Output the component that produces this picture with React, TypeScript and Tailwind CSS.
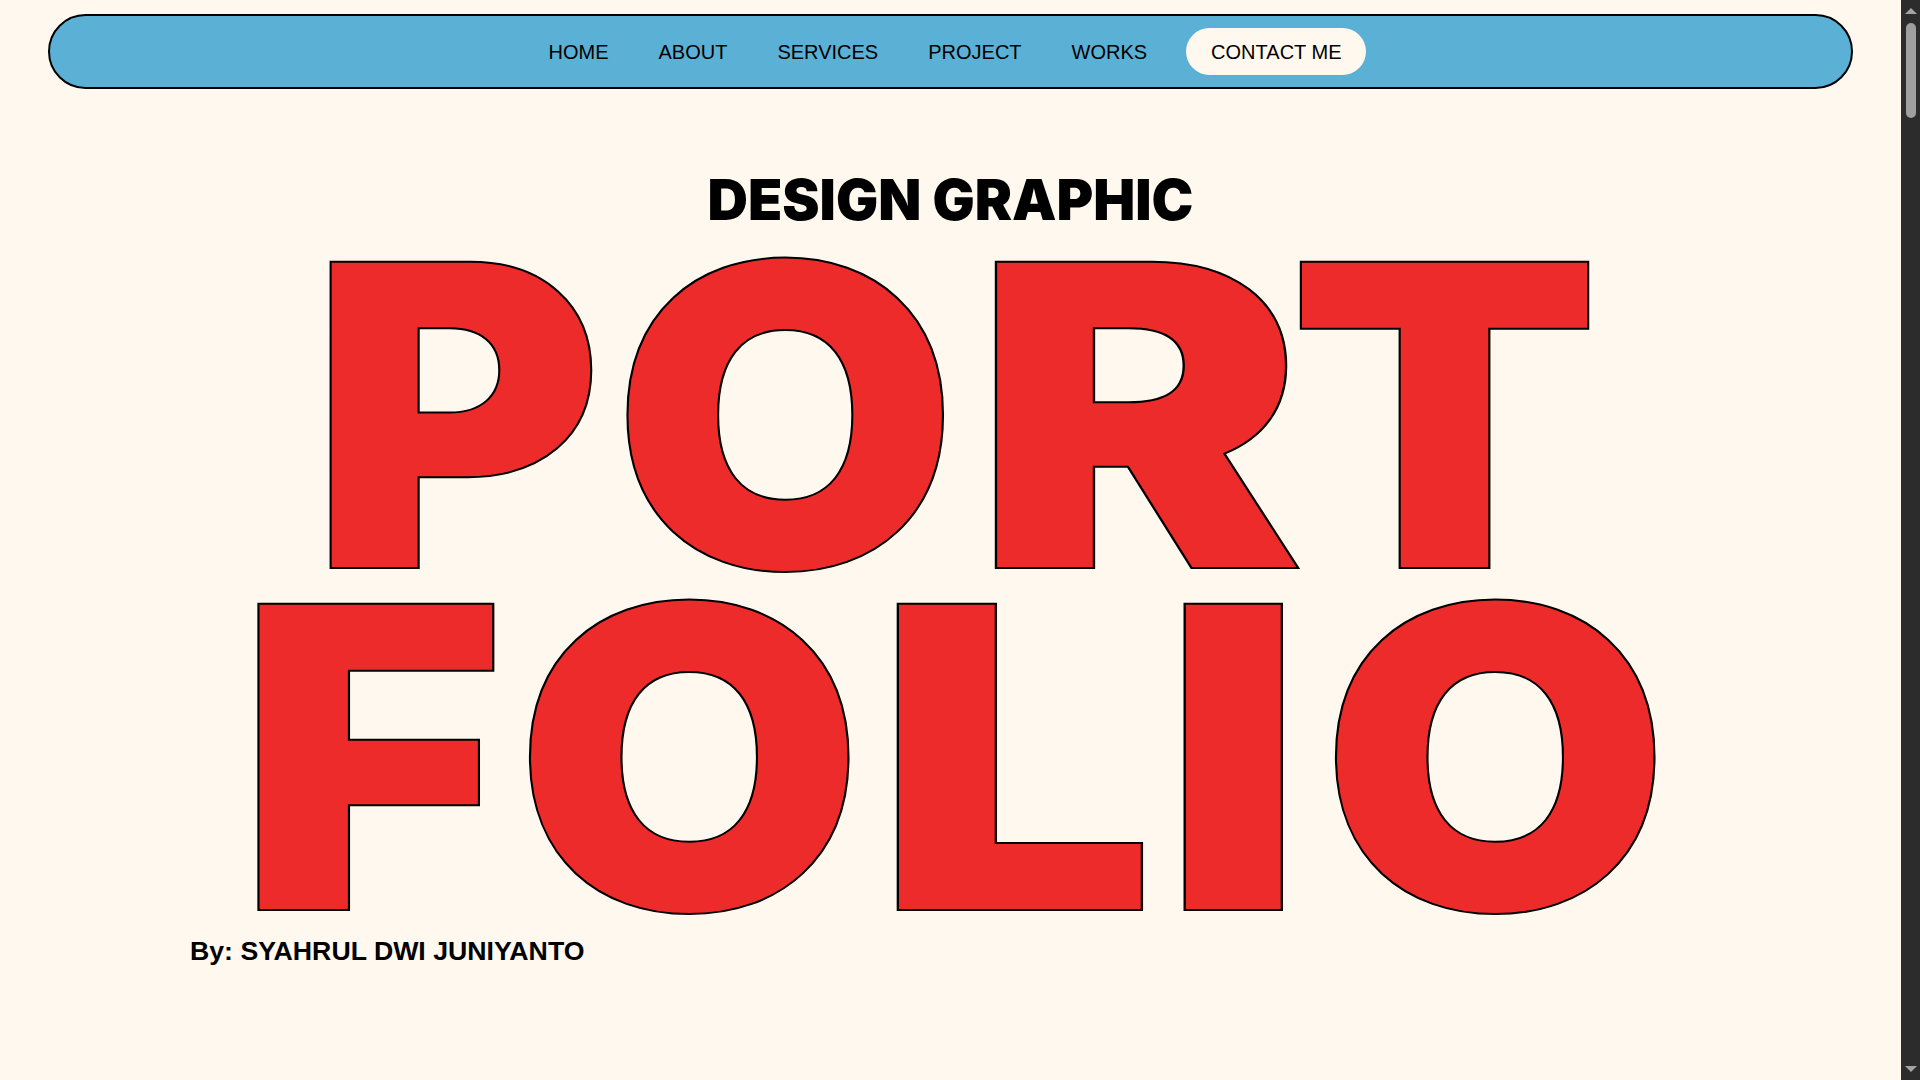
import React from "react";

const navItems = ["HOME", "ABOUT", "SERVICES", "PROJECT", "WORKS"];

type Letter = { ch: string; box: string; scale: string; gap: string };

const row1: Letter[] = [
  { ch: "P", box: "w-[261px]", scale: "scale-x-[1.06]", gap: "mr-[40px]" },
  { ch: "O", box: "w-[317px]", scale: "scale-x-[1.06]", gap: "mr-[44px]" },
  { ch: "R", box: "w-[302px]", scale: "scale-x-[1.18]", gap: "mr-[10px]" },
  { ch: "T", box: "w-[289px]", scale: "scale-x-[1.08]", gap: "" },
];

const row2: Letter[] = [
  { ch: "F", box: "w-[235px]", scale: "scale-x-[1.09]", gap: "mr-[42px]" },
  { ch: "O", box: "w-[319px]", scale: "scale-x-[1.07]", gap: "mr-[45px]" },
  { ch: "L", box: "w-[243px]", scale: "scale-x-[1.18]", gap: "mr-[48px]" },
  { ch: "I", box: "w-[97px]", scale: "scale-x-[1.17]", gap: "mr-[54px]" },
  { ch: "O", box: "w-[318px]", scale: "scale-x-[1.07]", gap: "" },
];

function Row({ letters, pad }: { letters: Letter[]; pad: string }) {
  return (
    <span className={`flex ${pad}`}>
      {letters.map((l, i) => (
        <span key={i} className={`flex justify-center ${l.box} ${l.gap}`}>
          <span className={`inline-block ${l.scale}`}>{l.ch}</span>
        </span>
      ))}
    </span>
  );
}

function FakeScrollbar() {
  return (
    <div className="flex h-full w-[19px] shrink-0 flex-col items-center bg-[#2c2c2c]">
      <div className="mt-[8px] h-0 w-0 border-x-[6px] border-b-[6px] border-x-transparent border-b-[#a3a3a3]" />
      <div className="mt-[9px] h-[95px] w-[10px] rounded-full bg-[#9f9f9f]" />
      <div className="flex-1" />
      <div className="mb-[8px] h-0 w-0 border-x-[6px] border-t-[6px] border-x-transparent border-t-[#a3a3a3]" />
    </div>
  );
}

export default function App() {
  return (
    <div className="flex h-screen w-full overflow-hidden bg-[#fff8ee] text-black">
      <div className="h-full min-w-0 flex-1 overflow-y-auto [scrollbar-width:none]">
        <header className="px-[48px] pt-[14px]">
          <nav className="flex h-[75px] items-center justify-center rounded-full border-2 border-black bg-[#5bb0d5] pl-[14px] font-['Liberation_Sans',Arial,sans-serif] text-[20px] leading-none text-black">
            <ul className="flex items-center gap-[50px]">
              {navItems.map((item) => (
                <li key={item}>
                  <a href="#" className="block">
                    {item}
                  </a>
                </li>
              ))}
            </ul>
            <a
              href="#"
              className="ml-[39px] flex h-[47px] items-center rounded-full bg-[#fff8ee] px-[25px]"
            >
              CONTACT ME
            </a>
          </nav>
        </header>

        <main className="flex flex-col">
          <h2 className="mt-[83px] text-center font-['Inter',sans-serif] text-[56px] font-black leading-none">
            DESIGN GRAPHIC
          </h2>
          <h1 className="mt-[16px] flex flex-col font-['Inter',sans-serif] text-[421px] font-black leading-[342px] text-[#ee2b2b] [-webkit-text-stroke:2px_black]">
            <Row letters={row1} pad="pl-[326px]" />
            <Row letters={row2} pad="pl-[253px]" />
          </h1>
          <p className="mt-[10px] ml-[190px] font-['Liberation_Sans',Arial,sans-serif] text-[26.7px] font-bold leading-none">
            By: SYAHRUL DWI JUNIYANTO
          </p>
          <div className="h-[10440px]" />
        </main>
      </div>
      <FakeScrollbar />
    </div>
  );
}
